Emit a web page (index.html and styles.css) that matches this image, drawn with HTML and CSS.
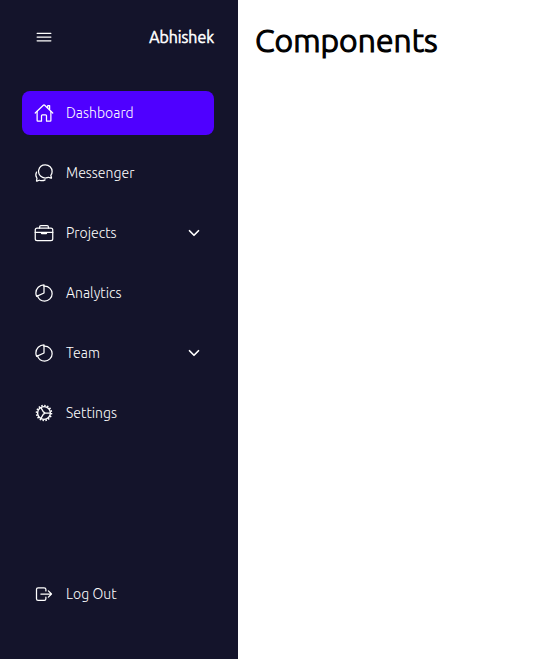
FILE: index.html
```html
<!DOCTYPE html>
<html lang="en">
<head>
<meta charset="utf-8">
<title>Components</title>
<link rel="stylesheet" href="styles.css">
</head>
<body>
<aside class="sidebar">
  <header class="brand">
    <svg class="icon burger" viewBox="0 0 512 512"><path d="M80 160h352M80 256h352M80 352h352"/></svg>
    <span class="name">Abhishek</span>
  </header>
  <nav class="menu">
    <a class="item active">
      <svg class="icon" viewBox="0 0 512 512"><path d="M80 212v236a16 16 0 0016 16h96V328a24 24 0 0124-24h80a24 24 0 0124 24v136h96a16 16 0 0016-16V212"/><path d="M480 256L266.89 52c-5-5.28-16.69-5.34-21.78 0L32 256M400 179V64h-48v69"/></svg>
      <span class="label">Dashboard</span>
    </a>
    <a class="item">
      <svg class="icon" viewBox="0 0 512 512"><path d="M431 320.6c-1-3.6 1.2-8.6 3.3-12.2a33.68 33.68 0 012.1-3.1A162 162 0 00464 215c.3-92.2-77.5-167-173.7-167-83.9 0-153.9 57.1-170.3 132.9a160.7 160.7 0 00-3.7 34.2c0 92.3 74.8 169.1 171 169.1 15.3 0 35.9-4.6 47.2-7.7s22.5-7.2 25.4-8.3a26.44 26.44 0 019.3-1.7 26 26 0 0110.1 2l56.7 20.1a13.52 13.52 0 003.9 1 8 8 0 008-8 12.85 12.85 0 00-.5-2.7z"/><path d="M66.46 232a146.23 146.23 0 006.39 152.67c2.31 3.49 3.61 6.19 3.21 8s-11.93 61.87-11.93 61.87a8 8 0 002.71 7.68A8.17 8.17 0 0072 464a7.26 7.26 0 002.91-.6l56.21-22a15.7 15.7 0 0112 .2c18.94 7.38 39.88 12 60.83 12A159.21 159.21 0 00284 432.11"/></svg>
      <span class="label">Messenger</span>
    </a>
    <a class="item">
      <svg class="icon" viewBox="0 0 512 512"><rect x="32" y="128" width="448" height="320" rx="48"/><path d="M144 128V96a32 32 0 0132-32h160a32 32 0 0132 32v32M480 240H32M320 240v24a8 8 0 01-8 8H200a8 8 0 01-8-8v-24"/></svg>
      <span class="label">Projects</span>
      <svg class="chevron" viewBox="0 0 512 512"><path d="M112 184l144 144 144-144"/></svg>
    </a>
    <a class="item">
      <svg class="icon" viewBox="0 0 512 512"><path d="M256.05 80.65Q263.94 80 272 80c106 0 192 86 192 192s-86 192-192 192A192.09 192.09 0 0189.12 330.65"/><path d="M256 48C141.12 48 48 141.12 48 256a207.29 207.29 0 0018.09 85L256 256z"/></svg>
      <span class="label">Analytics</span>
    </a>
    <a class="item">
      <svg class="icon" viewBox="0 0 512 512"><path d="M256.05 80.65Q263.94 80 272 80c106 0 192 86 192 192s-86 192-192 192A192.09 192.09 0 0189.12 330.65"/><path d="M256 48C141.12 48 48 141.12 48 256a207.29 207.29 0 0018.09 85L256 256z"/></svg>
      <span class="label">Team</span>
      <svg class="chevron" viewBox="0 0 512 512"><path d="M112 184l144 144 144-144"/></svg>
    </a>
    <a class="item">
      <svg class="icon" viewBox="0 0 512 512"><circle class="rim" cx="256" cy="256" r="164"/><circle class="teeth" cx="256" cy="256" r="190" pathLength="128"/><path d="M280 256h136M244 235l-68-118M244 277l-68 118M244 235q28-5 36 21q-8 26-36 21"/></svg>
      <span class="label">Settings</span>
    </a>
  </nav>
  <a class="item logout">
    <svg class="icon" viewBox="0 0 512 512"><path d="M304 336v40a40 40 0 01-40 40H104a40 40 0 01-40-40V136a40 40 0 0140-40h152c22.09 0 48 17.91 48 40v40M368 336l80-80-80-80M176 256h256"/></svg>
    <span class="label">Log Out</span>
  </a>
</aside>
<main class="content"><h1 class="title">Components</h1></main>
</body>
</html>
```
FILE: styles.css
```css
* { box-sizing: border-box; }
body {
  margin: 0;
  height: 659px;
  display: flex;
  overflow: hidden;
  background: #fff;
  font-family: Ubuntu, "Noto Sans", sans-serif;
}
.sidebar {
  width: 238px;
  height: 100%;
  padding: 22px 24px 43px 22px;
  display: flex;
  flex-direction: column;
  background: #14142b;
  color: #fff;
}
.brand {
  height: 30px;
  margin-bottom: 39px;
  padding-left: 12px;
  display: flex;
  align-items: center;
  justify-content: space-between;
}
.name { font-size: 16px; line-height: 30px; font-weight: 300; -webkit-text-stroke: 0.6px currentColor; }
.menu { display: flex; flex-direction: column; gap: 16px; }
.item {
  height: 44px;
  padding: 0 12px;
  display: flex;
  align-items: center;
  gap: 12px;
  border-radius: 8px;
}
.active { background: #4f00ff; }
.logout { margin-top: auto; }
.label { font-size: 14px; line-height: 20px; font-weight: 300; letter-spacing: 0.03px; white-space: nowrap; }
.icon {
  width: 20px;
  height: 20px;
  flex: none;
  fill: none;
  stroke: #fff;
  stroke-width: 32;
  stroke-linecap: round;
  stroke-linejoin: round;
}
.rim { stroke-width: 36; }
.teeth { stroke-width: 44; stroke-linecap: butt; stroke-dasharray: 4 4; }
.chevron {
  width: 16px;
  height: 16px;
  margin-left: auto;
  fill: none;
  stroke: #fff;
  stroke-width: 54;
  stroke-linecap: round;
  stroke-linejoin: round;
}
.content { flex: 1; padding: 16px 17px; }
.title { margin: 0; font-size: 32px; line-height: 48px; font-weight: 300; letter-spacing: 0.05px; -webkit-text-stroke: 1.2px currentColor; }
```
